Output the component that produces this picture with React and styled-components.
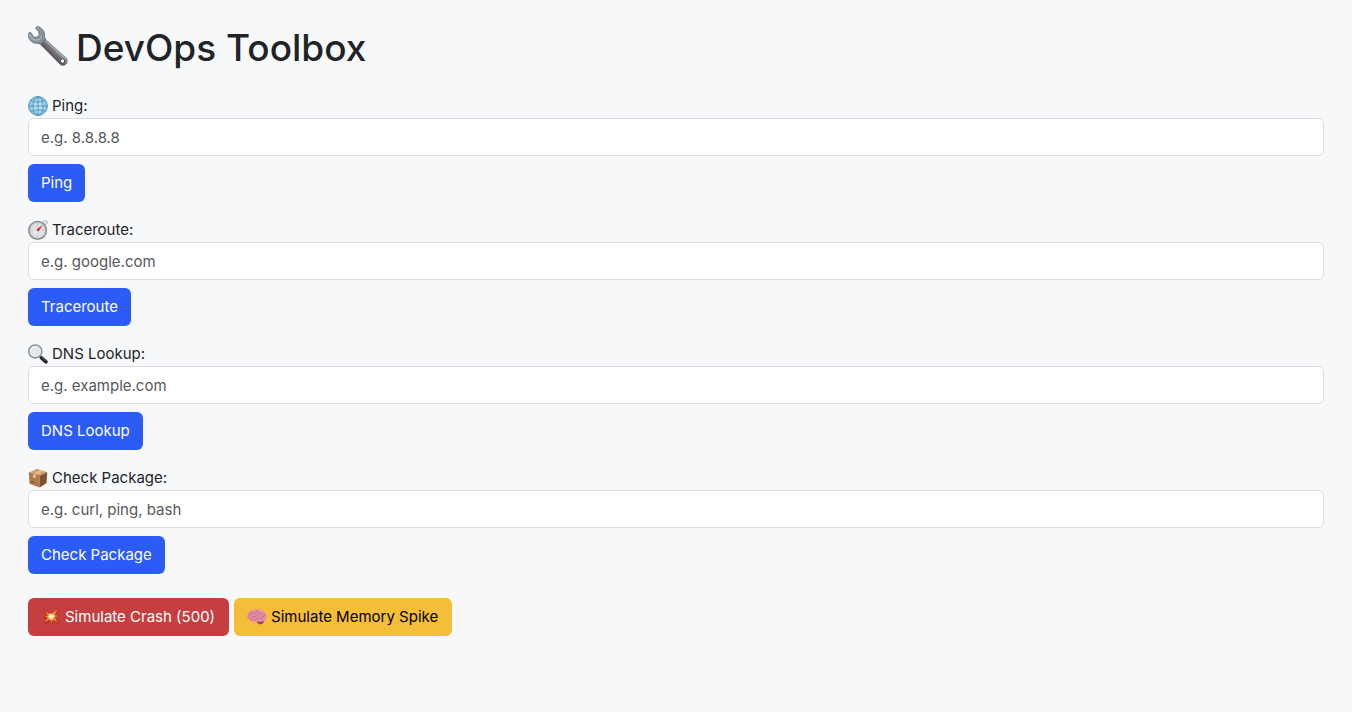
import React from "react";
import styled, { createGlobalStyle, css } from "styled-components";

const GlobalStyle = createGlobalStyle`
  *, *::before, *::after { box-sizing: border-box; }
  body {
    margin: 0;
    padding: 24px 28px;
    background: #f7f8fa;
    color: #212427;
    font-family: Inter, "Liberation Sans", sans-serif;
    font-size: 15px;
    line-height: 24px;
  }
`;

const Title = styled.h1`
  display: flex;
  align-items: center;
  gap: 8px;
  margin: 0 0 22px;
  font-size: 37px;
  font-weight: 500;
  line-height: 48px;
`;

const Icon = styled.svg`
  flex: none;
  display: block;
  width: 20px;
  height: 20px;
`;

const TitleIcon = styled(Icon)`
  width: 40px;
  height: 40px;
  margin-bottom: 4px;
`;

const ToolForm = styled.form`
  display: flex;
  flex-direction: column;
  align-items: flex-start;
  margin-bottom: 16px;
`;

const Label = styled.label`
  display: flex;
  align-items: center;
  gap: 4px;
`;

const TextInput = styled.input`
  width: 100%;
  height: 38px;
  margin-bottom: 8px;
  padding: 6px 12px;
  border: 1px solid #dadde1;
  border-radius: 6px;
  background: #fff;
  color: #212427;
  font: inherit;

  &::placeholder {
    color: #55585b;
    opacity: 1;
  }
`;

const tones = {
  primary: css`background: #2b5cf6; color: #fff;`,
  danger: css`background: #c53e40; color: #fff;`,
  warning: css`background: #f5be38; color: #000;`,
};

const Button = styled.button`
  display: flex;
  align-items: center;
  gap: 4px;
  height: 38px;
  padding: 0 13px;
  border: 0;
  border-radius: 6px;
  font: inherit;
  white-space: nowrap;
  cursor: pointer;
  ${(p) => tones[p.$tone]}
`;

const ActionButton = styled(Button)`
  padding: 0 14px 0 13px;
`;

const Actions = styled.div`
  display: flex;
  flex-wrap: wrap;
  gap: 5px;
  margin-top: 24px;
`;

const WrenchIcon = () => (
  <TitleIcon viewBox="0 0 40 40" aria-hidden="true">
    <defs>
      <linearGradient id="wrench" gradientUnits="userSpaceOnUse" x1="27" y1="21" x2="21" y2="27">
        <stop offset="0" stopColor="#a3a7b1" />
        <stop offset=".4" stopColor="#7d7881" />
        <stop offset="1" stopColor="#5b4f57" />
      </linearGradient>
      <linearGradient id="jaw" x1="0" y1="0" x2="1" y2="1">
        <stop offset="0" stopColor="#9aa6b0" />
        <stop offset="1" stopColor="#7c8691" />
      </linearGradient>
    </defs>
    <path d="M12 18 17 13 38.300 32c1.600 2.300 1.300 4.800-.4 6.300-1.900 1.600-4.500 1.600-6.200-.2z" fill="url(#wrench)" stroke="#655c65" strokeWidth=".5" />
    <path d="M8.200 1.300c.8-1 2.300-.8 3.100-.2 3.500 1.800 5.500 5 5.200 8.300 0 1.900.3 3 1.500 4.200l-5.200 5c-1.200-1-2.300-1.300-4.300-1.300C4.700 17.300 1.200 14.500.5 10.500.2 9 .3 7.700 1 6.800c.9-.9 1.800-.6 2.400.4l2.200 3.900 3.500.2 2.200-2.900-.8-3.100-2.100-2.100c-.6-.6-.7-1.400-.2-1.900z" fill="url(#jaw)" stroke="#59636d" strokeWidth=".8" />
    <path d="M17 14.500 36.500 32" stroke="#b4c3d3" strokeWidth="1" opacity=".8" />
    <path d="M2 9.200c1.200 3.500 4 5.200 7.500 5 2.300-.3 4-2 4.300-4.200" fill="none" stroke="#b9c5ce" strokeWidth=".9" />
    <circle cx="34.500" cy="35" r="2.200" fill="#f7f8fa" stroke="#4e454b" strokeWidth="1" />
  </TitleIcon>
);

const GlobeIcon = () => (
  <Icon viewBox="0 0 20 20" aria-hidden="true">
    <defs>
      <radialGradient id="globe">
        <stop offset="0" stopColor="#c9eaf8" />
        <stop offset=".7" stopColor="#a0d5ee" />
        <stop offset="1" stopColor="#70b2d6" />
      </radialGradient>
    </defs>
    <circle cx="10" cy="10" r="9.500" fill="url(#globe)" stroke="#5498be" strokeWidth=".8" />
    <g fill="none" stroke="#4b8bb0" strokeWidth=".8">
      <path d="M10 .5v19M.5 10h19M2.800 4.500c4 2 10.400 2 14.400 0M2.800 15.500c4-2 10.400-2 14.400 0" />
      <ellipse cx="10" cy="10" rx="5" ry="9.500" />
    </g>
  </Icon>
);

const CompassIcon = () => (
  <Icon viewBox="0 0 20 20" aria-hidden="true">
    <circle cx="17.300" cy="2.500" r="1.900" fill="none" stroke="#8c9095" strokeWidth=".8" />
    <circle cx="9.600" cy="10.400" r="8.800" fill="#ececec" stroke="#85888c" strokeWidth="1.500" />
    <circle cx="9.600" cy="10.400" r="7.300" fill="#e2e3e4" stroke="#bfc1c3" strokeWidth=".8" />
    <path d="M9.600 4v1.500M9.600 15.500V17M3.200 10.400h1.500M14.500 10.400H16" stroke="#a5a8ac" strokeWidth=".6" />
    <path d="m15 4.800-6.600 4.400 2.200 2.400z" fill="#e8322c" />
    <path d="m4.300 16 4.100-6.800 2.200 2.400z" fill="#fff" stroke="#bbb" strokeWidth=".4" />
    <circle cx="9.600" cy="10.400" r=".8" fill="#b33" />
  </Icon>
);

const MagnifierIcon = () => (
  <Icon viewBox="0 0 20 20" aria-hidden="true">
    <path d="m11.800 12.200 2.200 2" stroke="#62666a" strokeWidth="2" />
    <path d="m13.600 14 4.400 3.900" stroke="#25282b" strokeWidth="3.600" strokeLinecap="round" />
    <path d="m14 13.500 3.800 3.200" stroke="#686c70" strokeWidth=".7" />
    <circle cx="7.300" cy="7.400" r="6.600" fill="#e5e9ec" stroke="#85898e" strokeWidth="1.300" />
    <path d="M3 7.200C3.200 4.600 5 3.200 7.600 3" fill="none" stroke="#fff" strokeWidth="1.200" />
  </Icon>
);

const PackageIcon = () => (
  <Icon viewBox="0 0 20 20" aria-hidden="true">
    <path d="M.8 4.800 11.700 7.800v11.700L1.500 15.700z" fill="#ad7a49" />
    <path d="m11.700 7.800 7.500-3.600-.6 10.800-6.900 4.500z" fill="#80532d" />
    <path d="M.8 4.800 9 .7l10.200 3.500-7.500 3.600z" fill="#d0a06a" />
    <path d="m4.900 5.900 7.800-3.900 2.500.9-7.400 3.800v3.500l-2.900-.9z" fill="#e2c69b" />
    <path d="m.8 4.800 10.900 3 7.500-3.600" fill="none" stroke="#9c6b3b" strokeWidth=".5" />
    <path d="m3 13.400 3 .9" stroke="#704a29" strokeWidth=".8" />
  </Icon>
);

const CollisionIcon = () => (
  <Icon viewBox="0 0 20 20" aria-hidden="true">
    <path d="m11 5.500 6.500-4-2.700 6 3.600 1.500-3.800 1.600 3.400 6.300-5.800-3-.8 5-2.500-4.700-6 4 2.600-5.700L2 10.700l3.800-1.900-3.200-6.300 5.700 3z" fill="#b52c22" />
    <path d="m10.900 6 5.600-3.700-2.600 5.500 3.300 1.200-3.300 1.300 2.500 4.900-4.700-2.700-1 4-1.800-4-4.800 2.700 2.500-4.400-3.200-.9 3.300-1.300-2.700-4.700 4.500 2.600z" fill="#ed8630" />
    <path d="m10.600 6.200 1.100 1.600 2.100-.4-.8 1.700 1.300 1-1.900.7-.3 2.100-1.700-1.100-1.800 1.100-.3-2.100-1.800-.9 1.600-1.100-.6-2 2 .8z" fill="#ffd973" />
    <circle cx="10.200" cy="9.600" r="2" fill="#fffbe6" />
  </Icon>
);

const BrainIcon = () => (
  <Icon viewBox="0 0 20 20" aria-hidden="true">
    <path d="M9.500 14c2-2 7-1.800 7.500-.2.300 2.400-2 4-4.500 3.400-1.400-.3-2.600-1.200-3-3.200z" fill="#98495f" />
    <path d="M.3 10.500C-.2 7.600 1.200 5.200 3.500 4 5.800 2.500 8 2 10.500 2.300c2.500-.1 4.800.8 6.300 2.500 2.200 1.400 3.200 3.700 2.900 5.700-.2 2.500-1.700 4-4.200 4.100-1.700.5-3 .2-4.500-.2-1.500 1.100-3.500 1.200-4.800.2-1.400.4-2.700-.2-3-1.500C1.500 12.800.5 12 .3 10.500z" fill="#e28ba2" />
    <path d="M2 10c0-2 1-3 2.500-3s1.700-2 3.500-2.500M5 12c-.5-1.800.7-2.700 2.300-2.500 2.200.2 2-2 4-2 1.700 0 1.500-2 3.200-2M8.500 13c.3-1.800 1.500-2 3-1.800 2 .3 2-1.500 4-1.500 1 0 2-.8 2-2M11.500 4.200c-1.500-.2-2.300.4-2.500 1.500M14.500 12.700c.8-.3 1.500-.8 1.700-1.500" fill="none" stroke="#bb6480" strokeWidth=".7" strokeLinecap="round" />
    <path d="M5.500 4.200c1.500-1 3-1.100 4-1.100M13 3.800c1 .2 1.700.7 2.300 1.300" fill="none" stroke="#f8bdcb" strokeWidth=".7" />
  </Icon>
);

const tools = [
  { id: "ping", name: "Ping", hint: "e.g. 8.8.8.8", Glyph: GlobeIcon },
  { id: "traceroute", name: "Traceroute", hint: "e.g. google.com", Glyph: CompassIcon },
  { id: "dns", name: "DNS Lookup", hint: "e.g. example.com", Glyph: MagnifierIcon },
  { id: "package", name: "Check Package", hint: "e.g. curl, ping, bash", Glyph: PackageIcon },
];

export default function App() {
  return (
    <main>
      <GlobalStyle />
      <Title><WrenchIcon />DevOps Toolbox</Title>
      {tools.map(({ id, name, hint, Glyph }) => (
        <ToolForm key={id} onSubmit={(e) => e.preventDefault()}>
          <Label htmlFor={id}><Glyph /><span>{name}:</span></Label>
          <TextInput id={id} name={id} type="text" placeholder={hint} />
          <Button type="submit" $tone="primary">{name}</Button>
        </ToolForm>
      ))}
      <Actions>
        <ActionButton type="button" $tone="danger"><CollisionIcon />Simulate Crash (500)</ActionButton>
        <ActionButton type="button" $tone="warning"><BrainIcon />Simulate Memory Spike</ActionButton>
      </Actions>
    </main>
  );
}
